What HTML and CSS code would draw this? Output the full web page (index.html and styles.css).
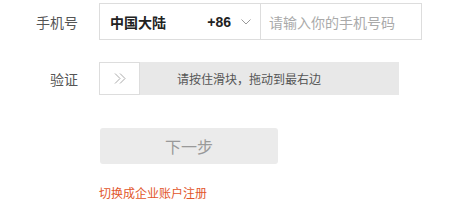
FILE: index.html
```html
<!DOCTYPE html>
<html lang="zh-CN">
<head>
    <meta charset="UTF-8">
    <title>注册</title>
    <link rel="stylesheet" href="styles.css">
</head>
<body>
    <div class="register-form">
        <div class="form-row phone-row">
            <label class="form-label">手机号</label>
            <div class="phone-group">
                <div class="area-select">
                    <span class="area-name">中国大陆</span>
                    <span class="area-code">+86</span>
                    <svg class="area-arrow" width="10" height="6" viewBox="0 0 10 6"><path d="M0.5 0.5 L5 5 L9.5 0.5" fill="none" stroke="#999" stroke-width="1"/></svg>
                </div>
                <input class="phone-input" type="text" placeholder="请输入你的手机号码">
            </div>
        </div>

        <div class="form-row verify-row">
            <label class="form-label">验证</label>
            <div class="slider">
                <div class="slider-handle">
                    <svg width="12" height="11" viewBox="0 0 12 11"><path d="M1 0.5 L6 5.5 L1 10.5 M6 0.5 L11 5.5 L6 10.5" fill="none" stroke="#aaa" stroke-width="1"/></svg>
                </div>
                <span class="slider-text">请按住滑块，拖动到最右边</span>
            </div>
        </div>

        <div class="form-row action-row">
            <button class="next-btn">下一步</button>
        </div>

        <div class="form-row link-row">
            <a class="switch-link" href="#">切换成企业账户注册</a>
        </div>
    </div>
</body>
</html>
```

FILE: styles.css
```css
body {
    margin: 0;
    font-family: "Noto Sans CJK SC", "Liberation Sans", sans-serif;
    background: #fff;
    color: #333;
}
.register-form {
    padding-top: 3px;
}
.form-row {
    display: flex;
    align-items: center;
    padding-left: 99px;
}
.form-label {
    width: 78px;
    margin-left: -99px;
    margin-right: 21px;
    text-align: right;
    font-size: 14px;
    color: #555;
}
.phone-group {
    display: flex;
    height: 37px;
    border: 1px solid #ddd;
    box-sizing: border-box;
}
.area-select {
    width: 161px;
    display: flex;
    align-items: center;
    padding: 0 9px 0 10px;
    box-sizing: border-box;
    border-right: 1px solid #ddd;
}
.area-name {
    font-size: 14px;
    font-weight: bold;
    color: #222;
    flex: 1;
}
.area-code {
    font-size: 14px;
    font-weight: bold;
    color: #222;
    font-family: "Liberation Sans", sans-serif;
    margin-right: 10px;
}
.area-arrow {
    display: block;
}
.phone-input {
    width: 160px;
    border: none;
    outline: none;
    padding: 0 0 0 8px;
    font-size: 14px;
    font-family: inherit;
    color: #333;
    box-sizing: border-box;
}
.phone-input::placeholder {
    color: #aaa;
}
.verify-row {
    margin-top: 22px;
}
.slider {
    position: relative;
    width: 300px;
    height: 33px;
    background: #e8e8e8;
    display: flex;
    align-items: center;
    justify-content: center;
}
.slider-handle {
    position: absolute;
    left: 0;
    top: 0;
    width: 41px;
    height: 33px;
    background: #fff;
    border: 1px solid #ddd;
    box-sizing: border-box;
    display: flex;
    align-items: center;
    justify-content: center;
}
.slider-text {
    font-size: 12px;
    color: #555;
}
.action-row {
    margin-top: 33px;
}
.next-btn {
    margin-left: 1px;
    width: 178px;
    height: 36px;
    border: none;
    border-radius: 3px;
    background: #ebebeb;
    color: #999;
    font-size: 16px;
    font-family: inherit;
}
.link-row {
    margin-top: 20px;
}
.switch-link {
    font-size: 12px;
    color: #e2562b;
    text-decoration: none;
}
```
